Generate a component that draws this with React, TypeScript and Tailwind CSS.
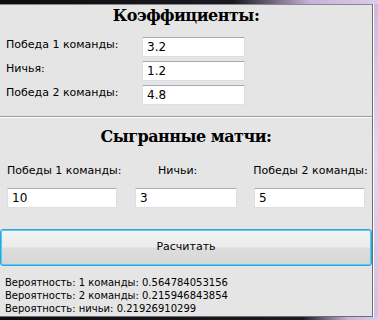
import React from "react";

const sans = { fontFamily: '"DejaVu Sans", Verdana, sans-serif' };
const serif = { fontFamily: '"DejaVu Serif", Georgia, serif' };

function Field({ value, className }: { value: string; className: string }) {
  return (
    <div
      className={`h-[20px] bg-white border border-[#dcdfe4] border-t-[#a9abaf] flex items-center pl-[4px] text-[12px] text-black ${className}`}
      style={sans}
    >
      {value}
    </div>
  );
}

export default function App() {
  const coefs = [
    { label: "Победа 1 команды:", value: "3.2" },
    { label: "Ничья:", value: "1.2" },
    { label: "Победа 2 команды:", value: "4.8" },
  ];

  return (
    <div className="w-[378px] h-[320px] overflow-hidden flex flex-col bg-[#d8c8e8]">
      {/* window frame top */}
      <div className="h-[4px] shrink-0 bg-[linear-gradient(90deg,#0c0c10_0%,#1a1a22_62%,#c6b2da_82%,#dccbe9_100%)]" />
      <div className="flex flex-1 min-h-0">
        {/* client area */}
        <div
          className="w-[373px] h-[313px] bg-[#e5e5e5] border-t border-r border-b border-t-[#8a8a8a] border-r-[#6e6e6e] border-b-[#6e6e6e] flex flex-col text-black"
          style={sans}
        >
          <h1
            className="mt-[1px] h-[20px] leading-[20px] text-center text-[16px] font-bold tracking-[-0.5px]"
            style={serif}
          >
            Коэффициенты:
          </h1>

          <div className="mt-[11px] flex flex-col gap-[4px]">
            {coefs.map((c) => (
              <div key={c.label} className="flex items-center h-[20px]">
                <span className="w-[142px] pl-[6px] -mt-[3px] text-[11px] whitespace-nowrap">{c.label}</span>
                <Field value={c.value} className="w-[103px]" />
              </div>
            ))}
          </div>

          <div className="mt-[11px] border-t border-b border-t-[#9c9c9c] border-b-white" />

          <h2
            className="mt-[9px] h-[20px] leading-[20px] text-center text-[16px] font-bold tracking-[-0.5px]"
            style={serif}
          >
            Сыгранные матчи:
          </h2>

          <div className="mt-[17px] flex pl-[7px] text-[11px] leading-[14px] whitespace-nowrap">
            <div className="w-[110px]">Победы 1 команды:</div>
            <div className="ml-[18px] w-[102px] pl-[23px]">Ничьи:</div>
            <div className="ml-[17px] w-[120px]">Победы 2 команды:</div>
          </div>

          <div className="mt-[10px] flex pl-[7px]">
            <Field value="10" className="w-[110px]" />
            <Field value="3" className="ml-[18px] w-[102px]" />
            <Field value="5" className="ml-[17px] w-[111px]" />
          </div>

          <button
            type="button"
            className="mt-[21px] h-[37px] w-[372px] rounded-[3px] border border-[#3c9ed4] shadow-[inset_0_0_0_1px_#48d2f8] bg-[linear-gradient(180deg,#f3f3f3_0%,#ececec_48%,#dddddd_52%,#d6d6d6_100%)] text-[11px] text-black"
            style={sans}
          >
            Расчитать
          </button>

          <div className="mt-[10px] pl-[5px] text-[10px] leading-[13px]">
            <div>Вероятность: 1 команды: 0.564784053156</div>
            <div>Вероятность: 2 команды: 0.215946843854</div>
            <div>Вероятность: ничьи: 0.21926910299</div>
          </div>
        </div>
        {/* window frame right */}
        <div className="flex-1 border-l border-white bg-[linear-gradient(180deg,#cdb9e0_0%,#e4d6f0_50%,#d2bfe4_100%)]" />
      </div>
      {/* window frame bottom */}
      <div className="h-[3px] shrink-0 bg-[linear-gradient(90deg,#0c0c10_0%,#1a1a22_80%,#c6b2da_92%,#dccbe9_100%)]" />
    </div>
  );
}
